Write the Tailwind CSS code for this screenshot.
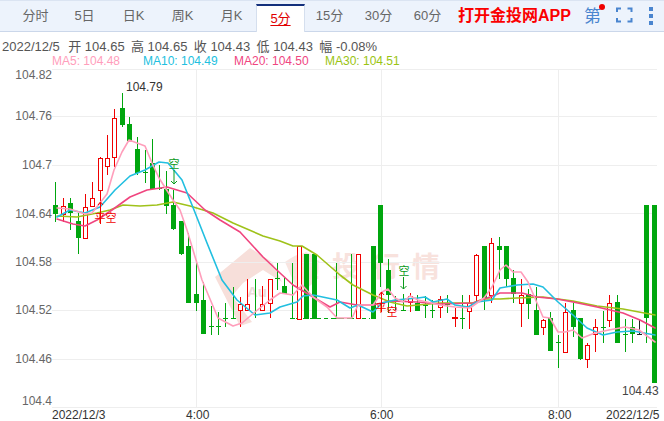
<!DOCTYPE html>
<html>
<head>
<meta charset="utf-8">
<script src="https://cdn.jsdelivr.net/npm/@tailwindcss/browser@4"></script>
</head>
<body class="bg-white">
<div class="w-[664px] h-[421px] overflow-hidden relative font-['Liberation_Sans','Noto_Sans_CJK_SC',sans-serif]">
  <div class="h-[32px] bg-[#edf3fc] border-t border-b border-[#dbe4f2] border-b-[#cbd7ea] flex items-stretch pl-[11px] text-[13px] text-[#666]">
    <div class="w-[49px] flex items-center justify-center">分时</div>
    <div class="w-[49px] flex items-center justify-center">5日</div>
    <div class="w-[49px] flex items-center justify-center">日K</div>
    <div class="w-[49px] flex items-center justify-center">周K</div>
    <div class="w-[49px] flex items-center justify-center">月K</div>
    <div class="w-[49px] mt-[3px] -mb-px flex items-center justify-center bg-white border-t-2 border-t-[#14307c] border-x border-x-[#d5dfee] text-[#e00000] underline underline-offset-2">5分</div>
    <div class="w-[49px] flex items-center justify-center">15分</div>
    <div class="w-[49px] flex items-center justify-center">30分</div>
    <div class="w-[49px] flex items-center justify-center">60分</div>
    <div class="ml-[6px] flex items-center text-[16px] font-bold text-[#fb0000] whitespace-nowrap">打开金投网APP</div>
    <div class="relative ml-[13px] flex items-center text-[17px] text-[#4a85cf] leading-none">第<span class="absolute left-[15px] top-[3px] w-[6px] h-[6px] rounded-full bg-[#f00000]"></span></div>
    <svg class="ml-[15px] mt-[6px]" width="17" height="16" viewBox="0 0 17 16" fill="none" stroke="#4a85cf" stroke-width="2"><path d="M1 5V1.5H5M11.5 1.5H15.500V5M1 11V14.500H5M11.500 14.500H15.500V11"/></svg>
    <div class="ml-[16px] mt-[6px] flex flex-col gap-[3px]"><span class="w-[4px] h-[4px] bg-[#4a85cf]"></span><span class="w-[4px] h-[4px] bg-[#4a85cf]"></span><span class="w-[4px] h-[4px] bg-[#4a85cf]"></span></div>
  </div>
  <div class="h-[19px] pl-[2px] pt-[6px] flex gap-[6.4px] text-[13px] leading-[18px] text-[#555] whitespace-nowrap">
    <span class="mr-[2px]">2022/12/5</span><span>开 104.65</span><span>高 104.65</span><span>收 104.43</span><span>低 104.43</span><span>幅 -0.08%</span>
  </div>
  <div class="h-[13px] mt-[4px] relative pl-[52px] flex text-[12px] leading-[13px] whitespace-nowrap">
    <span class="w-[91px] text-[#ff9ebb]">MA5: 104.48</span>
    <span class="w-[91px] text-[#22bfe0]">MA10: 104.49</span>
    <span class="w-[91px] text-[#f0457f]">MA20: 104.50</span>
    <span class="text-[#9ac412]">MA30: 104.51</span>
  </div>
  <svg class="absolute left-0 top-0" width="664" height="421" viewBox="0 0 664 421" font-family="Liberation Sans, Noto Sans CJK SC, sans-serif" font-size="12">
    <!-- watermark -->
    <path d="M215 277L250 248L272 262L282 282L263 270L243 283L232 296L252 322L240 326Z" fill="#f7dfda"/>
    <path d="M285 262Q310 244 318 262Q322 284 298 292Z" fill="#f8e5e1"/>
    <text x="247" y="297" font-size="15" font-weight="bold" fill="#ecdcd9">Au</text>
    <text x="292" y="277" font-size="28" font-weight="bold" fill="#f8e2dd" font-family="Noto Sans CJK SC, sans-serif" letter-spacing="12">金投行情</text>
    <!-- grid -->
    <path d="M52 69.500H657M52 116.500H657M52 165.500H657M52 213.500H657M52 262.500H657M52 310.500H657M52 359.500H657M52 407.500H657M196.500 70V407M381.500 70V407M558.500 70V407" stroke="#eeeeee" fill="none"/>
    <!-- green wicks -->
    <path stroke="#00a60e" fill="none" d="M55.500 182V222M70.500 198V230M78.500 213V254M122.500 93V127M129.500 117V142M137.500 137V175M145.500 150V183M143 172.500H148M152.500 139V189M159.500 165V190M157 188.500H162M166.500 171V214M173.500 190V230M181.500 221V255M188.500 233V303M196.500 260V311M203.500 282V334M211.500 306V335M209 326.500H214M218.500 312V335M216 326.500H221M225.500 303V327M223 318.500H228M233.500 287V318M231 318.500H236M255.500 279V318M277.500 263V290M275 278.500H280M284.500 278V294M292.500 263V318M290 318.500H295M336.500 263V318M334 318.500H339M351.500 254V318M349 318.500H354M380.500 263V287M388.500 259V313M395.500 296V310M393 300.500H398M403.500 294V310M401 310.500H406M417.500 295V311M425.500 296V318M423 305.500H428M432.500 300V318M430 310.500H435M447.500 295V313M445 304.500H450M462.500 295V329M460 318.500H465M484.500 298V310M499.500 237V279M506.500 279V287M513.500 270V303M528.500 289V319M536.500 287V310M550.500 312V351M558.500 335V368M556 342.500H561M573.500 303V337M580.500 318V360M603.500 311V343M601 327.500H606M617.500 295V343M625.500 319V352M623 334.500H628M632.500 319V343M646.500 318V343"/>
    <path stroke="#00a60e" fill="none" stroke-dasharray="4 3" d="M296 318.500H340M340 318.500H349M362 318.500H370"/>
    <!-- green bodies -->
    <path fill="#00a60e" d="M53 205h5v9h-5zM68 203h5v10h-5zM76 221h5v17h-5zM120 108h5v17h-5zM127 124h5v17h-5zM135 149h5v24h-5zM150 163h5v26h-5zM164 189h5v17h-5zM171 205h5v24h-5zM179 221h5v33h-5zM186 246h5v57h-5zM194 294h5v9h-5zM201 300h5v34h-5zM282 286h5v8h-5zM304 254h5v65h-5zM312 254h5v65h-5zM371 246h5v73h-5zM378 205h5v58h-5zM386 270h5v25h-5zM415 303h5v8h-5zM482 246h5v52h-5zM497 246h5v4h-5zM504 246h5v33h-5zM511 278h5v16h-5zM526 294h5v10h-5zM534 310h5v25h-5zM548 318h5v33h-5zM571 310h5v17h-5zM578 318h5v41h-5zM615 302h5v41h-5zM630 327h5v7h-5zM644 205h5v113h-5zM652 205h5v178h-5z"/>
    <!-- black doji -->
    <path stroke="#222" fill="none" d="M639.500 320V334M637 334.500H642"/>
    <!-- red wicks -->
    <path stroke="#f00000" fill="none" d="M63.500 198V222M85.500 194V239M92.500 182V207M100.500 157V223M107.500 135V175M114.500 109V167M240.500 297V327M247.500 279V310M262.500 286V310M270.500 279V318M358.500 254V318M410.500 293V312M440.500 296V318M455.500 308V327M452 318.500H458M452 317.500H458M469.500 295V329M476.500 254V303M491.500 238V303M521.500 279V327M543.500 319V335M565.500 303V352M587.500 343V368M595.500 319V352M609.500 295V327"/>
    <!-- red hollow bodies -->
    <g fill="#fff" stroke="#f00000">
      <rect x="61.500" y="206.500" width="4" height="8"/><rect x="83.500" y="207.500" width="4" height="31"/><rect x="90.500" y="198.500" width="4" height="8"/><rect x="98.500" y="158.500" width="4" height="32"/><rect x="105.500" y="158.500" width="4" height="8"/><rect x="112.500" y="118.500" width="4" height="39"/><rect x="238.500" y="304.500" width="4" height="6"/><rect x="245.500" y="304.500" width="4" height="6"/><rect x="260.500" y="304.500" width="4" height="6"/><rect x="268.500" y="279.500" width="4" height="24"/><rect x="297.500" y="246.500" width="4" height="73"/><rect x="356.500" y="254.500" width="4" height="64"/><rect x="408.500" y="296.500" width="4" height="6"/><rect x="438.500" y="299.500" width="4" height="8"/><rect x="467.500" y="303.500" width="4" height="8"/><rect x="474.500" y="255.500" width="4" height="40"/><rect x="489.500" y="243.500" width="4" height="52"/><rect x="519.500" y="295.500" width="4" height="8"/><rect x="541.500" y="320.500" width="4" height="7"/><rect x="563.500" y="312.500" width="4" height="40"/><rect x="585.500" y="345.500" width="4" height="14"/><rect x="593.500" y="327.500" width="4" height="7"/><rect x="607.500" y="303.500" width="4" height="17"/>
    </g>
    <!-- moving averages -->
    <g fill="none" stroke-width="1.600" stroke-linejoin="round" stroke-linecap="round">
      <polyline stroke="#9fc21a" points="57,216 77,217 97,213 110,210 123,205 140,206 157,205 173,202 190,206 213,213 233,223 263,236 280,241 293,246 302,246 317,255 340,275 353,285 373,295 390,302 407,306 440,303 473,303 483,299 500,299 517,298 543,297 573,301 597,306 623,309 655,315"/>
      <polyline stroke="#f0457f" points="57,219 73,224 85,226 97,220 112,210 130,197 147,190 167,187 187,193 205,210 220,220 240,232 263,257 280,273 293,285 313,297 330,307 340,302 357,305 373,305 390,301 417,302 440,304 473,303 490,297 500,293 522,293 537,297 557,299 573,302 597,307 623,313 640,320 655,328"/>
      <polyline stroke="#22bfe0" points="57,217 70,210 85,213 100,207 115,190 130,176 145,170 159,162 168,163 182,180 194,210 207,243 222,280 237,300 255,315 270,313 280,307 297,302 303,296 313,295 337,300 350,308 358,305 373,312 382,303 395,300 418,298 425,297 433,302 447,299 455,305 468,307 477,302 492,300 500,288 517,285 533,284 543,287 558,302 573,315 587,328 603,335 617,332 633,331 655,335"/>
      <polyline stroke="#ff9ebb" points="57,208 70,209 85,214 92,213 100,203 107,194 114,170 122,152 129,140 145,146 152,163 159,178 173,200 180,210 187,230 202,280 218,318 233,326 242,323 255,312 270,300 280,293 293,295 302,285 313,297 327,307 337,318 352,318 358,305 373,305 382,292 388,289 395,298 403,302 410,296 418,300 440,305 455,307 470,308 484,298 492,287 500,270 506,265 513,272 521,272 528,282 543,317 550,318 558,332 565,332 573,330 582,338 595,333 609,330 625,327 639,330 655,342"/>
    </g>
    <!-- trade markers -->
    <g font-family="Noto Sans CJK SC, sans-serif" font-size="11" text-anchor="middle">
      <text x="174" y="168" fill="#0a9a1a">空</text>
      <path d="M174 170V184M171 181L174 184L177 181" fill="none" stroke="#0a9a1a"/>
      <text x="404" y="275" fill="#0a9a1a">空</text>
      <path d="M403.500 277V289M400.500 286L403.500 289L406.500 286" fill="none" stroke="#0a9a1a"/>
      <text x="111" y="222" fill="#f00000">空</text>
      <text x="100" y="222" fill="#f00000">平</text>
      <path d="M100.500 202V224M98 205L100.500 202L103 205" fill="none" stroke="#f00000"/>
      <text x="392" y="316" fill="#f00000">空</text>
      <text x="381" y="312" fill="#f00000">平</text>
      <path d="M381.500 292V312M379 295L381.500 292L384 295" fill="none" stroke="#f00000"/>
    </g>
    <!-- axis labels -->
    <g fill="#666" text-anchor="end">
      <text x="52" y="79">104.82</text>
      <text x="52" y="120">104.76</text>
      <text x="52" y="169">104.7</text>
      <text x="52" y="218">104.64</text>
      <text x="52" y="266">104.58</text>
      <text x="52" y="314">104.52</text>
      <text x="52" y="363">104.46</text>
      <text x="52" y="405">104.4</text>
    </g>
    <g fill="#333">
      <text x="126" y="91">104.79</text>
      <text x="622" y="395" fill="#444">104.43</text>
      <text x="52" y="419">2022/12/3</text>
      <text x="186" y="419">4:00</text>
      <text x="370" y="419">6:00</text>
      <text x="548" y="419">8:00</text>
      <text x="606" y="419">2022/12/5</text>
    </g>
  </svg>
</div>
</body>
</html>
